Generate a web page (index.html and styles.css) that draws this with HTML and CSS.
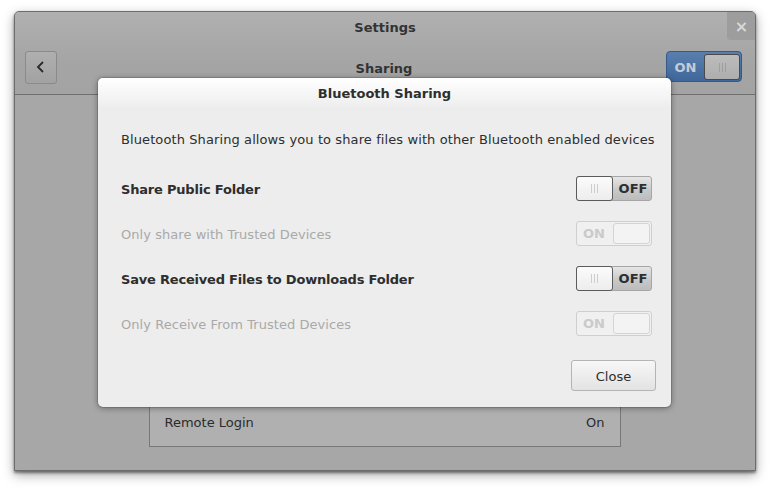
FILE: index.html
```html
<!DOCTYPE html>
<html>
<head>
<meta charset="utf-8">
<title>Settings</title>
<link rel="stylesheet" href="styles.css">
</head>
<body>
<div class="window">
  <header class="header">
    <div class="titlebar">Settings</div>
    <div class="toolbar">
      <div class="tb-start">
        <button class="back" aria-label="Back">
          <svg width="12" height="14" viewBox="0 0 12 14"><polyline points="8,2 3,7 8,12" fill="none" stroke="#2a2a2a" stroke-width="1.8"/></svg>
        </button>
      </div>
      <div class="toolbar-title">Sharing</div>
      <div class="tb-end">
        <div class="main-switch">
          <span class="main-on">ON</span>
          <span class="main-slider"><span class="grip grip-dark"></span></span>
        </div>
      </div>
    </div>
    <div class="wclose">×</div>
  </header>
  <main class="content">
    <div class="list">
      <div class="list-spacer"></div>
      <div class="list-row"><span>Remote Login</span><span>On</span></div>
    </div>
  </main>
</div>

<div class="dialog">
  <div class="dialog-title">Bluetooth Sharing</div>
  <div class="dialog-body">
    <p class="desc">Bluetooth Sharing allows you to share files with other Bluetooth enabled devices</p>
    <div class="row">
      <span class="label strong">Share Public Folder</span>
      <div class="switch off"><span class="slider"><span class="grip"></span></span><span class="state">OFF</span></div>
    </div>
    <div class="row">
      <span class="label dim">Only share with Trusted Devices</span>
      <div class="switch disabled"><span class="state">ON</span><span class="slider"></span></div>
    </div>
    <div class="row">
      <span class="label strong">Save Received Files to Downloads Folder</span>
      <div class="switch off"><span class="slider"><span class="grip"></span></span><span class="state">OFF</span></div>
    </div>
    <div class="row">
      <span class="label dim">Only Receive From Trusted Devices</span>
      <div class="switch disabled"><span class="state">ON</span><span class="slider"></span></div>
    </div>
  </div>
  <div class="dialog-actions">
    <button class="btn">Close</button>
  </div>
</div>
</body>
</html>
```
FILE: styles.css
```css
html, body {
  margin: 0;
  padding: 0;
  background: #ffffff;
  font-family: "DejaVu Sans", "Noto Sans", sans-serif;
  font-size: 13px;
  color: #2e2e2e;
}

body {
  height: 488px;
}

.window {
  position: relative;
  margin: 11px 0 0 14px;
  width: 742px;
  height: 460px;
  box-sizing: border-box;
  border: 1px solid #6c6c6c;
  border-radius: 5px 5px 0 0;
  background: #a6a6a6;
  box-shadow: 0 2px 3px rgba(0, 0, 0, 0.45), 0 4px 12px rgba(0, 0, 0, 0.35);
  display: flex;
  flex-direction: column;
  overflow: hidden;
}

.header {
  position: relative;
  height: 82px;
  border-bottom: 1px solid #6f6f6f;
  background: linear-gradient(#b0b0b0, #a5a5a5 60%, #a3a3a3);
  display: flex;
  flex-direction: column;
}

.titlebar {
  height: 30px;
  display: flex;
  align-items: center;
  justify-content: center;
  font-weight: bold;
  color: #333;
}

.toolbar {
  flex: 1;
  display: grid;
  grid-template-columns: 1fr auto 1fr;
  align-items: center;
  padding: 0 13px 3px 10px;
}

.tb-start {
  display: flex;
  justify-content: flex-start;
}

.tb-end {
  display: flex;
  justify-content: flex-end;
}

.back {
  width: 32px;
  height: 33px;
  box-sizing: border-box;
  border: 1px solid #8a8a8a;
  border-radius: 3px;
  background: linear-gradient(#afafaf, #a2a2a2);
  display: flex;
  align-items: center;
  justify-content: center;
  padding: 0;
  margin-top: 1px;
}

.toolbar-title {
  font-weight: bold;
  color: #333;
  padding-top: 3px;
  padding-left: 1px;
}

.main-switch {
  width: 76px;
  height: 31px;
  box-sizing: border-box;
  border: 1px solid #34598b;
  border-radius: 4px;
  background: linear-gradient(#5a7fae, #40679b);
  display: flex;
  align-items: stretch;
  padding: 2px 1px 1px 0;
}

.main-on {
  flex: 1;
  display: flex;
  align-items: center;
  justify-content: center;
  font-weight: bold;
  color: #c3ccd8;
  font-size: 13px;
  padding-top: 1px;
}

.main-slider {
  width: 36px;
  box-sizing: border-box;
  border: 1px solid #4a4a4a;
  border-radius: 3px;
  background: linear-gradient(#bcbcbc, #aeaeae);
  display: flex;
  align-items: center;
  justify-content: center;
}

.grip {
  width: 7px;
  height: 9px;
  background: repeating-linear-gradient(90deg, #cdcdcd 0 1px, transparent 1px 3px);
}

.grip-dark {
  background: repeating-linear-gradient(90deg, #9e9e9e 0 1px, transparent 1px 3px);
}

.wclose {
  position: absolute;
  top: 0;
  right: 0;
  width: 28px;
  height: 28px;
  background: #9d9d9d;
  border-bottom-left-radius: 4px;
  color: #d9d9d9;
  font-weight: bold;
  font-size: 16px;
  display: flex;
  align-items: center;
  justify-content: center;
  padding-left: 1px;
  box-sizing: border-box;
}

.content {
  flex: 1;
  display: flex;
  flex-direction: column;
  justify-content: flex-end;
  align-items: center;
  padding-bottom: 23px;
  background: #a7a7a7;
}

.list {
  width: 472px;
  box-sizing: border-box;
  border: 1px solid #787878;
  background: #b0b0b0;
  margin-right: 1px;
}

.list-spacer {
  height: 200px;
}

.list-row {
  height: 49px;
  box-sizing: border-box;
  display: flex;
  align-items: center;
  justify-content: space-between;
  padding: 2px 15px 0;
  color: #2b2b2b;
}

.dialog {
  position: absolute;
  left: 98px;
  top: 78px;
  width: 573px;
  height: 329px;
  box-sizing: border-box;
  border-radius: 5px;
  background: #ededed;
  box-shadow: 0 1px 6px rgba(0, 0, 0, 0.4), 0 0 0 1px rgba(0, 0, 0, 0.12);
  display: flex;
  flex-direction: column;
  overflow: hidden;
}

.dialog-title {
  height: 30px;
  display: flex;
  align-items: center;
  justify-content: center;
  font-weight: bold;
  color: #2e2e2e;
  background: linear-gradient(#ffffff, #f1f1f1 80%, #ededed);
  box-sizing: border-box;
}

.dialog-body {
  padding: 22px 19px 0 23px;
}

.desc {
  margin: 1px 0 17px 0;
  line-height: 18px;
  letter-spacing: 0.1px;
  white-space: nowrap;
}

.row {
  height: 45px;
  display: flex;
  align-items: center;
  justify-content: space-between;
}

.label {
  letter-spacing: 0.05px;
  white-space: nowrap;
  padding-top: 2px;
}

.label.strong {
  font-weight: bold;
  letter-spacing: -0.2px;
}

.label.dim {
  color: #a9a9a9;
}

.switch {
  width: 76px;
  height: 25px;
  box-sizing: border-box;
  border-radius: 3px;
  display: flex;
  align-items: stretch;
  font-weight: bold;
  font-size: 13px;
}

.switch .state {
  flex: 1;
  display: flex;
  align-items: center;
  justify-content: center;
}

.switch .slider {
  width: 37px;
  box-sizing: border-box;
  border-radius: 3px;
  display: flex;
  align-items: center;
  justify-content: center;
}

.switch.off {
  border: 1px solid #a6a6a6;
  background: linear-gradient(#e6e6e6, #c9c9c9 55%, #bcbcbc);
  color: #2e2e2e;
}

.switch.off .slider {
  margin: -1px 0 -1px -1px;
  border: 1px solid #5b5b5b;
  background: linear-gradient(#fbfbfb, #ededed);
}

.switch.off .state {
  padding-left: 2px;
}

.switch.disabled {
  border: 1px solid #cfcfcf;
  background: #f0f0f0;
  color: #cacaca;
}

.switch.disabled .state {
  padding-right: 2px;
}

.switch.disabled .slider {
  margin: 1px 1px 1px 0;
  border: 1px solid #d4d4d4;
  background: #f3f3f3;
}

.dialog-actions {
  flex: 1;
  display: flex;
  justify-content: flex-end;
  align-items: flex-start;
  padding: 14px 15px 0 0;
}

.btn {
  width: 85px;
  height: 31px;
  border: 1px solid #b4b4b4;
  border-radius: 3px;
  background: linear-gradient(#f7f7f7, #e3e3e3);
  font-family: inherit;
  font-size: 13px;
  color: #2e2e2e;
  padding: 2px 0 0;
}
```
